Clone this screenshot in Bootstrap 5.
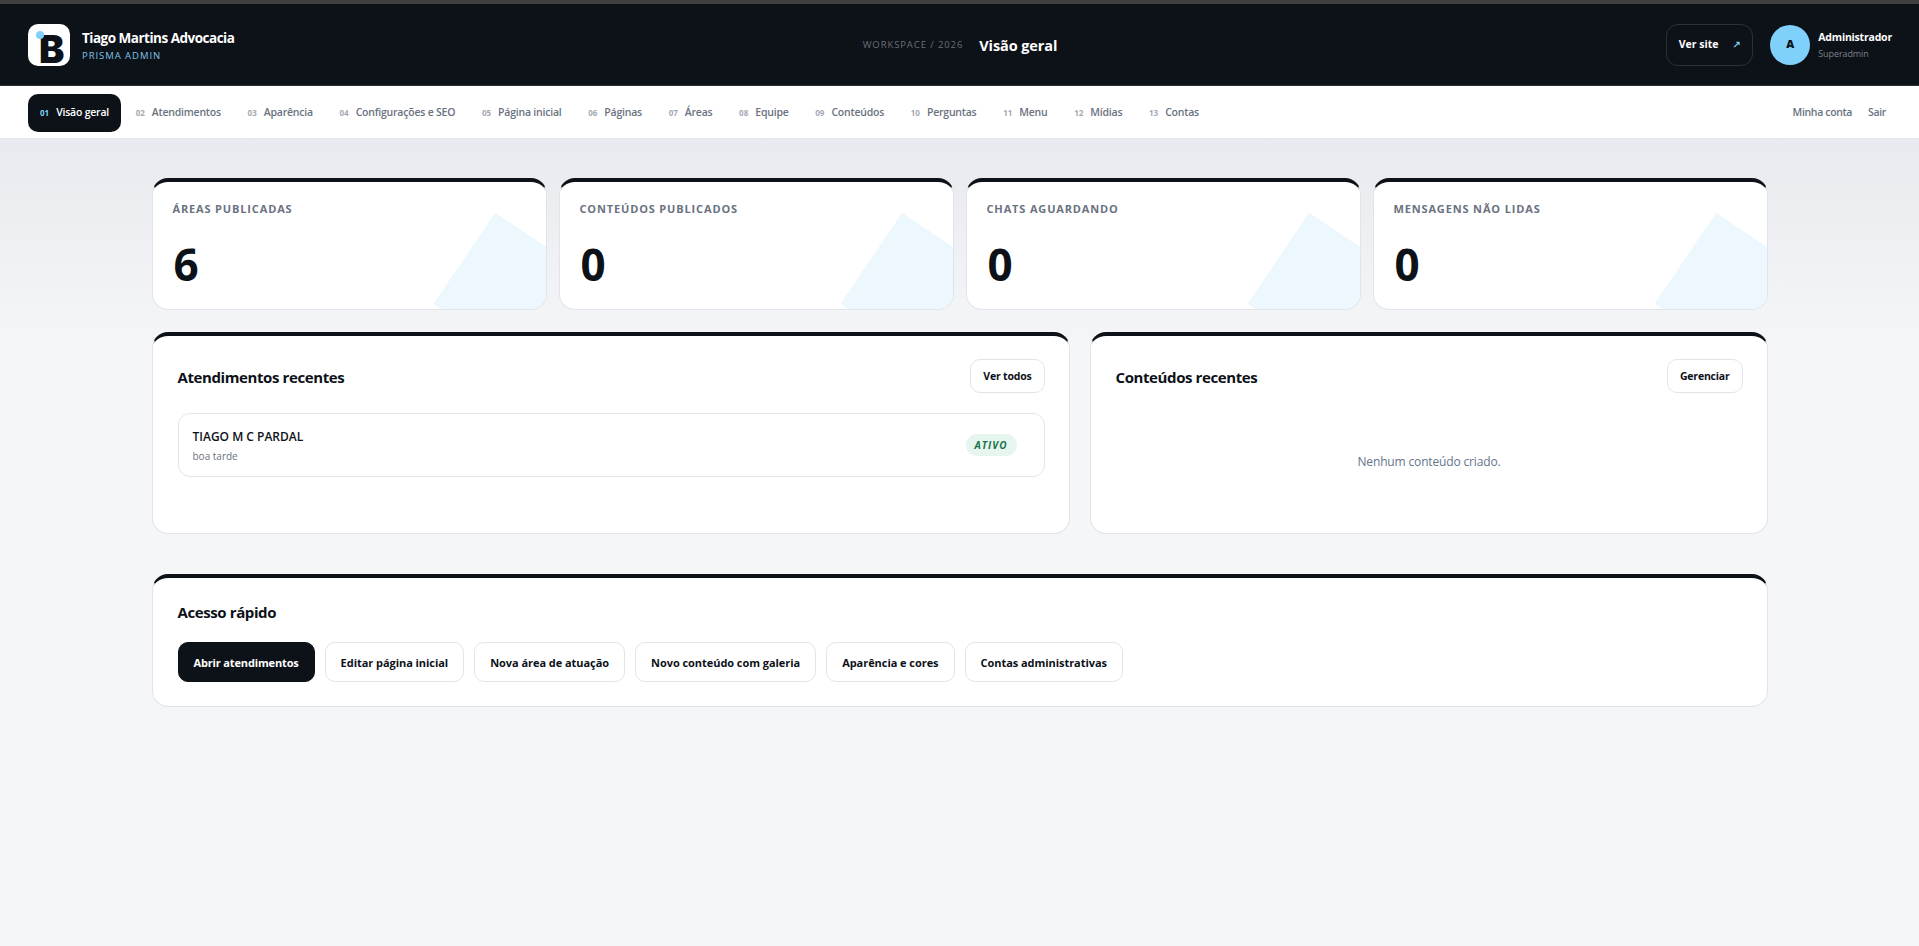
<!DOCTYPE html>
<html lang="pt-BR">
<head>
  <meta charset="utf-8">
  <meta name="viewport" content="width=device-width">
  <title>Visão geral</title>
  <link href="https://cdn.jsdelivr.net/npm/bootstrap@5.3.3/dist/css/bootstrap.min.css" rel="stylesheet" type="text/css" />
  <style>
    body{
      font-family: "Open Sans", "Liberation Sans", sans-serif;
      background: #f5f6f8;
      color: #0d1118;
      min-height: 946px;
    }
    .top-strip{ height: 4px; background: #3f3f3f; }
    .admin-head{
      height: 82px;
      background: #0d1118;
      border-bottom: 1px solid #2a2d33;
      padding: 0 27px 0 28px;
    }
    .head-side{ width: 560px; }
    .logo-box{
      width: 42px; height: 42px;
      background: #fff;
      border-radius: 10px;
      color: #0d1118;
      font-family: Inter, sans-serif;
      font-weight: 900;
      font-size: 38px;
      line-height: 1;
      padding: 6px 0 0 11px;
    }
    .logo-dot{
      position: absolute;
      left: 8px; top: 7px;
      width: 8px; height: 8px;
      border-radius: 50%;
      background: #7fd1fc;
    }
    .brand-name{ font-size: 13.5px; font-weight: 700; color: #fff; line-height: 18px; letter-spacing: -.5px; margin-top: 3px; }
    .brand-sub{ font-size: 9.5px; font-weight: 500; color: #7fc4e8; letter-spacing: .95px; line-height: 14px; margin-top: 2px; }
    .crumb{ font-size: 9.5px; font-weight: 500; letter-spacing: .9px; color: #6b6f76; }
    .page-name{ font-size: 14.5px; font-weight: 700; color: #fff; letter-spacing: -.1px; }
    .head-mid{ padding-top: 2px; }
    .site-btn{
      width: 87px; height: 42px;
      border: 1px solid #2c3038;
      border-radius: 12px;
      color: #fff;
      font-size: 10.5px;
      font-weight: 700;
      margin-right: 17px;
    }
    .site-btn:hover{ color: #fff; border-color: #2c3038; }
    .site-arrow{ color: #7fd1fc; font-family: "DejaVu Sans", sans-serif; font-size: 10px; margin-left: -2px; }
    .user-avatar{
      width: 40px; height: 40px;
      border-radius: 50%;
      background: #7fd1fc;
      color: #0d1118;
      font-size: 11px;
      font-weight: 800;
    }
    .user-name{ font-size: 10.5px; font-weight: 700; color: #fff; line-height: 15px; letter-spacing: -.2px; margin-top: 1px; }
    .user-role{ font-size: 9px; color: #7c8087; line-height: 13px; margin-top: 2px; letter-spacing: -.1px; }

    .admin-nav{
      height: 53px;
      background: #fff;
      border-bottom: 1px solid #e4e7ec;
      padding: 2px 33px 0 28px;
    }
    .admin-nav .nav{ gap: 2.7px; }
    .admin-nav .nav-link{
      height: 38px;
      display: flex;
      align-items: center;
      padding: 0 12px;
      border-radius: 10px;
      font-size: 10.5px;
      font-weight: 600;
      color: #6a7280;
      letter-spacing: -.22px;
    }
    .admin-nav .nav-link.active{ background: #0d1118; color: #fff; }
    .nav-num{ font-size: 8px; font-weight: 700; color: #a4a9b2; margin-right: 7px; letter-spacing: 0; }
    .nav-link.active .nav-num{ color: #7fd1fc; }
    .nav-side{ font-size: 10.5px; font-weight: 600; color: #6a7280; text-decoration: none; letter-spacing: -.35px; }

    .admin-main{
      background: linear-gradient(#e7eaee 0, #f5f6f8 210px);
      min-height: 807px;
      padding-top: 39px;
    }
    .main-wrap{ width: 1616px; margin: 0 auto; }
    .stat-grid{ display: grid; grid-template-columns: repeat(4, 1fr); gap: 12px; margin-bottom: 22px; }
    .panel-grid{ display: grid; grid-template-columns: 918px 678px; gap: 20px; margin-bottom: 40px; }
    .panel-box{
      background: #fff;
      border: 1px solid #e1e4ea;
      border-top: 4px solid #0d1118;
      border-radius: 16px;
      position: relative;
      overflow: hidden;
    }
    .stat-box{ height: 132px; padding: 18px 20px 0 20px; }
    .stat-box::after{
      content: "";
      position: absolute;
      right: -19px; top: 52px;
      width: 110px; height: 110px;
      background: #ecf7fe;
      transform: rotate(34deg);
    }
    .stat-label{ font-size: 11px; font-weight: 700; letter-spacing: .85px; color: #6a7280; line-height: 18px; }
    .stat-value{ font-size: 44px; font-weight: 700; line-height: 60px; margin: 16px 0 0 1px; position: relative; z-index: 1; }
    .list-panel{ height: 202px; padding: 23px 24px 0 25px; }
    .panel-title{ font-size: 15px; font-weight: 700; margin: 2px 0 0; color: #0d1118; letter-spacing: -.4px; }
    .ghost-btn{
      height: 34px;
      padding: 2px 12px 0;
      display: inline-flex;
      align-items: center;
      border: 1px solid #e1e4ea;
      border-radius: 10px;
      background: #fff;
      color: #0d1118;
      font-size: 10.5px;
      font-weight: 700;
      letter-spacing: -.2px;
    }
    .chat-row{
      height: 64px;
      margin-top: 20px;
      padding: 0 27px 0 14px;
      border: 1px solid #e1e4ea;
      border-radius: 12px;
    }
    .chat-name{ font-size: 12px; font-weight: 600; line-height: 16px; color: #0d1118; margin-top: 1px; }
    .chat-text{ font-size: 10px; color: #6a7280; line-height: 14px; margin-top: 4px; }
    .state-pill{
      background: #e6f5ee;
      color: #17734a;
      border-radius: 11px;
      width: 51px;
      height: 22px;
      padding: 0;
      line-height: 22px;
      font-size: 10px;
      font-weight: 700;
      font-style: italic;
      letter-spacing: 1px;
    }
    .empty-note{ font-size: 12px; color: #64748b; text-align: center; margin-top: 60px; letter-spacing: -.15px; }
    .quick-panel{ height: 133px; padding: 23px 24px 0 25px; }
    .quick-row{ gap: 10px; margin-top: 21px; }
    .quick-btn{
      height: 40px;
      padding: 2px 15px 0;
      display: inline-flex;
      align-items: center;
      border: 1px solid #e1e4ea;
      border-radius: 10px;
      background: #fff;
      color: #0d1118;
      font-size: 11px;
      font-weight: 700;
      letter-spacing: -.05px;
    }
    .quick-btn.is-dark{ background: #0d1118; border-color: #0d1118; color: #fff; letter-spacing: -.15px; }
  </style>
</head>
<body>
  <div class="top-strip"></div>
  <header class="admin-head d-flex align-items-center justify-content-between">
    <div class="head-side d-flex align-items-center gap-2">
      <div class="logo-box position-relative me-1">B<span class="logo-dot"></span></div>
      <div>
        <div class="brand-name">Tiago Martins Advocacia</div>
        <div class="brand-sub">PRISMA ADMIN</div>
      </div>
    </div>
    <div class="head-mid d-flex align-items-center gap-3">
      <span class="crumb">WORKSPACE / 2026</span>
      <span class="page-name">Visão geral</span>
    </div>
    <div class="head-side d-flex align-items-center justify-content-end">
      <a href="#" class="btn site-btn d-flex align-items-center justify-content-center gap-3 p-0">Ver site <span class="site-arrow">↗</span></a>
      <div class="user-avatar d-flex align-items-center justify-content-center me-2">A</div>
      <div>
        <div class="user-name">Administrador</div>
        <div class="user-role">Superadmin</div>
      </div>
    </div>
  </header>
  <nav class="admin-nav d-flex align-items-center justify-content-between">
    <ul class="nav">
      <li class="nav-item"><a class="nav-link active" href="#"><span class="nav-num">01</span>Visão geral</a></li>
      <li class="nav-item"><a class="nav-link" href="#"><span class="nav-num">02</span>Atendimentos</a></li>
      <li class="nav-item"><a class="nav-link" href="#"><span class="nav-num">03</span>Aparência</a></li>
      <li class="nav-item"><a class="nav-link" href="#"><span class="nav-num">04</span>Configurações e SEO</a></li>
      <li class="nav-item"><a class="nav-link" href="#"><span class="nav-num">05</span>Página inicial</a></li>
      <li class="nav-item"><a class="nav-link" href="#"><span class="nav-num">06</span>Páginas</a></li>
      <li class="nav-item"><a class="nav-link" href="#"><span class="nav-num">07</span>Áreas</a></li>
      <li class="nav-item"><a class="nav-link" href="#"><span class="nav-num">08</span>Equipe</a></li>
      <li class="nav-item"><a class="nav-link" href="#"><span class="nav-num">09</span>Conteúdos</a></li>
      <li class="nav-item"><a class="nav-link" href="#"><span class="nav-num">10</span>Perguntas</a></li>
      <li class="nav-item"><a class="nav-link" href="#"><span class="nav-num">11</span>Menu</a></li>
      <li class="nav-item"><a class="nav-link" href="#"><span class="nav-num">12</span>Mídias</a></li>
      <li class="nav-item"><a class="nav-link" href="#"><span class="nav-num">13</span>Contas</a></li>
    </ul>
    <div class="d-flex align-items-center gap-3">
      <a class="nav-side" href="#">Minha conta</a>
      <a class="nav-side" href="#">Sair</a>
    </div>
  </nav>
  <main class="admin-main">
    <div class="main-wrap">
      <section class="stat-grid">
        <div class="panel-box stat-box"><div class="stat-label">ÁREAS PUBLICADAS</div><div class="stat-value">6</div></div>
        <div class="panel-box stat-box"><div class="stat-label">CONTEÚDOS PUBLICADOS</div><div class="stat-value">0</div></div>
        <div class="panel-box stat-box"><div class="stat-label">CHATS AGUARDANDO</div><div class="stat-value">0</div></div>
        <div class="panel-box stat-box"><div class="stat-label">MENSAGENS NÃO LIDAS</div><div class="stat-value">0</div></div>
      </section>
      <section class="panel-grid">
        <div class="panel-box list-panel">
          <div class="d-flex align-items-center justify-content-between">
            <h2 class="panel-title">Atendimentos recentes</h2>
            <a href="#" class="btn ghost-btn">Ver todos</a>
          </div>
          <div class="chat-row d-flex align-items-center justify-content-between">
            <div>
              <div class="chat-name">TIAGO M C PARDAL</div>
              <div class="chat-text">boa tarde</div>
            </div>
            <span class="badge state-pill">ATIVO</span>
          </div>
        </div>
        <div class="panel-box list-panel">
          <div class="d-flex align-items-center justify-content-between">
            <h2 class="panel-title">Conteúdos recentes</h2>
            <a href="#" class="btn ghost-btn">Gerenciar</a>
          </div>
          <p class="empty-note">Nenhum conteúdo criado.</p>
        </div>
      </section>
      <section class="panel-box quick-panel">
        <h2 class="panel-title">Acesso rápido</h2>
        <div class="quick-row d-flex">
          <a href="#" class="btn quick-btn is-dark">Abrir atendimentos</a>
          <a href="#" class="btn quick-btn">Editar página inicial</a>
          <a href="#" class="btn quick-btn">Nova área de atuação</a>
          <a href="#" class="btn quick-btn">Novo conteúdo com galeria</a>
          <a href="#" class="btn quick-btn">Aparência e cores</a>
          <a href="#" class="btn quick-btn">Contas administrativas</a>
        </div>
      </section>
    </div>
  </main>
  <script src="https://cdn.jsdelivr.net/npm/bootstrap@5.3.3/dist/js/bootstrap.bundle.min.js"></script>
</body>
</html>
